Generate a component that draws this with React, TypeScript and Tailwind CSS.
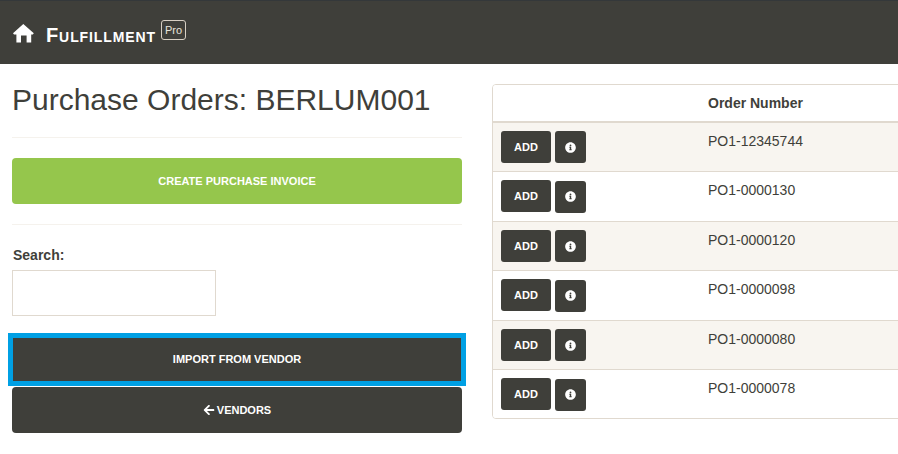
import { FaArrowLeft, FaInfoCircle } from 'react-icons/fa';

const orders = ['PO1-12345744', 'PO1-0000130', 'PO1-0000120', 'PO1-0000098', 'PO1-0000080', 'PO1-0000078'];

function HomeIcon() {
  return (
    <svg width="21" height="19" viewBox="0 0 21 19" fill="currentColor" className="shrink-0">
      <path d="M10.3 0 L20.8 9.3 L19.8 10.6 L18.2 10.6 L18.2 18.4 L13.6 18.4 L13.6 11.6 L8 11.6 L8 18.4 L3.4 18.4 L3.4 10.6 L1 10.6 L0 9.3 Z" />
    </svg>
  );
}

function OrderRow({ order, index }: { order: string; index: number }) {
  const striped = index % 2 === 0;
  return (
    <div className={`flex h-[49.5px] border-b border-[#e0d9cf] pl-2 last:h-[48px] last:border-b-0 ${striped ? 'bg-[#f8f5f0]' : 'bg-white'}`}>
      <div className="flex w-[207px] shrink-0 items-start gap-1 pt-[8.4px]">
        <button type="button" className="h-8 w-[50px] rounded-[3px] bg-[#3f3f3a] text-[11px] font-bold text-white">
          ADD
        </button>
        <button type="button" className="mt-[0.4px] flex h-8 w-[31px] items-center justify-center rounded-[3px] bg-[#3f3f3a] text-white">
          <FaInfoCircle size={11} />
        </button>
      </div>
      <p className="pt-[8.2px] text-sm leading-5 text-[#3f3f3a]">{order}</p>
    </div>
  );
}

export default function App() {
  return (
    <div className="h-[454px] w-[898px] overflow-hidden bg-white font-['Liberation_Sans',sans-serif] text-[#3f3f3a]">
      <header className="flex h-16 items-center border-t border-[#34383a] bg-[#3f3f3a] pl-[13px] text-white">
        <span className="mt-[2px]">
          <HomeIcon />
        </span>
        <span className="ml-3 mt-[5px] text-[20px] font-bold leading-none tracking-[0.9px] [font-variant:small-caps]">Fulfillment</span>
        <span className="mb-[5px] ml-[5px] rounded-[3px] border border-[#d8d0c4] px-[3px] py-[2px] text-[11px] leading-[14px] text-[#e8e4dc]">Pro</span>
      </header>

      <main className="flex items-start">
        <section className="ml-3 w-[450px] shrink-0">
          <h1 className="mt-[18px] text-3xl leading-[36px]">Purchase Orders: BERLUM001</h1>
          <hr className="mt-[19px] border-[#f5f2ed]" />
          <button type="button" className="mt-5 h-[46px] w-full rounded-[4px] bg-[#95c64c] text-[11px] font-bold text-white">
            CREATE PURCHASE INVOICE
          </button>
          <hr className="mt-5 border-[#f5f2ed]" />
          <label className="mt-5 block pl-px text-sm font-bold leading-5">Search:</label>
          <input type="text" className="mt-[5px] block h-[46px] w-[204px] border border-[#e0d9cf] bg-white" />
          <div className="-mx-[4px] mt-[17px] border-[5px] border-[#00a0e4]">
            <button type="button" className="block h-[43px] w-full bg-[#3f3f3a] text-[11px] font-bold text-white">
              IMPORT FROM VENDOR
            </button>
          </div>
          <button type="button" className="mt-[1px] flex h-[46px] w-full items-center justify-center gap-[2px] rounded-[4px] bg-[#3f3f3a] text-[11px] font-bold text-white">
            <FaArrowLeft size={12} />
            VENDORS
          </button>
        </section>

        <section className="ml-[30px] mt-5 w-[500px] shrink-0 overflow-hidden rounded-[4px] border border-[#e0d9cf]">
          <div className="flex h-[37.5px] border-b-2 border-[#e0d9cf] bg-white pl-2">
            <div className="w-[207px] shrink-0" />
            <p className="pt-2 text-sm font-bold leading-5">Order Number</p>
          </div>
          {orders.map((order, i) => (
            <OrderRow key={order} order={order} index={i} />
          ))}
        </section>
      </main>
    </div>
  );
}
